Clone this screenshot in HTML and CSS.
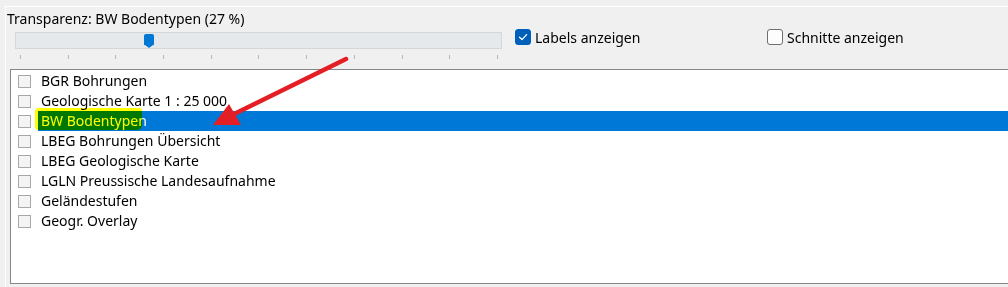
FILE: index.html
```html
<!DOCTYPE html>
<html lang="de">
<head>
<meta charset="utf-8">
<title>Transparenz</title>
<link rel="stylesheet" href="styles.css">
</head>
<body>
<div class="frame">
  <div class="top">
    <div class="slider-col">
      <div class="title">Transparenz: BW Bodentypen (27 %)</div>
      <div class="track"><span class="thumb"></span></div>
      <div class="ticks">
        <i></i><i></i><i></i><i></i><i></i><i></i><i></i><i></i><i></i><i></i><i></i>
      </div>
    </div>
    <label class="opt opt-labels"><span class="cb checked"><svg viewBox="0 0 16 16" width="16" height="16"><path d="M4.5 8.3 L7 10.6 L11.6 5.6" fill="none" stroke="#fff" stroke-width="1.3" stroke-linecap="round" stroke-linejoin="round"/></svg></span>Labels anzeigen</label>
    <label class="opt opt-schnitte"><span class="cb"></span>Schnitte anzeigen</label>
  </div>
  <div class="listbox">
    <div class="row"><span class="box"></span><span class="txt">BGR Bohrungen</span></div>
    <div class="row"><span class="box"></span><span class="txt">Geologische Karte 1 : 25 000</span></div>
    <div class="row selected"><span class="box"></span><span class="txt">BW Bodentypen</span></div>
    <div class="row"><span class="box"></span><span class="txt">LBEG Bohrungen Übersicht</span></div>
    <div class="row"><span class="box"></span><span class="txt">LBEG Geologische Karte</span></div>
    <div class="row"><span class="box"></span><span class="txt">LGLN Preussische Landesaufnahme</span></div>
    <div class="row"><span class="box"></span><span class="txt">Geländestufen</span></div>
    <div class="row"><span class="box"></span><span class="txt">Geogr. Overlay</span></div>
  </div>
</div>
<div class="marker"></div>
<svg class="arrow" width="1008" height="287" viewBox="0 0 1008 287">
  <line x1="346" y1="59" x2="226" y2="118" stroke="#e31e24" stroke-width="4.5" stroke-linecap="round"/>
  <polygon points="213,125 229,104 241,125" fill="#e31e24"/>
</svg>
</body>
</html>
```

FILE: styles.css
```css
html, body {
  margin: 0;
  padding: 0;
  width: 1008px;
  height: 287px;
  overflow: hidden;
  background: #f0f0f0;
  font-family: "Segoe UI", "Noto Sans", "Open Sans", sans-serif;
  font-size: 14px;
  color: #000;
}
.frame {
  margin: 6px 0 0 5px;
  border-top: 1px solid #ffffff;
  border-left: 1px solid #ffffff;
  height: 280px;
  position: relative;
}
.top {
  display: flex;
  align-items: flex-start;
  height: 62px;
}
.slider-col {
  width: 496px;
  padding-left: 1px;
}
.title {
  height: 20px;
  line-height: 20px;
  margin-top: 2px;
  white-space: nowrap;
}
.track {
  margin: 3px 0 0 8px;
  width: 485px;
  height: 15px;
  background: #e6e9eb;
  border: 1px solid #d4d6d8;
  position: relative;
}
.thumb {
  position: absolute;
  left: 128px;
  top: 1px;
  width: 10px;
  height: 11px;
  background: #0078d4;
  border-radius: 2px 2px 0 0;
}
.thumb::after {
  content: "";
  position: absolute;
  left: 1px;
  top: 11px;
  border-left: 4px solid transparent;
  border-right: 4px solid transparent;
  border-top: 3px solid #0078d4;
}
.ticks {
  display: flex;
  justify-content: space-between;
  width: 478px;
  margin: 6px 0 0 13px;
  height: 4px;
}
.ticks i {
  display: block;
  width: 1px;
  height: 4px;
  background: #b8b8b8;
}
.opt {
  display: flex;
  align-items: center;
  margin-top: 22px;
  white-space: nowrap;
  height: 16px;
}
.opt-labels { margin-left: 12px; width: 252px; }
.cb {
  width: 14px;
  height: 14px;
  border: 1px solid #6f6f6f;
  border-radius: 3px;
  background: #fdfdfd;
  margin-right: 4px;
  display: inline-block;
  box-sizing: content-box;
}
.cb.checked {
  background: #005fb8;
  border-color: #005fb8;
  position: relative;
}
.cb.checked svg {
  position: absolute;
  left: -1px;
  top: -1px;
}
.listbox {
  margin-left: 4px;
  height: 215px;
  width: 998px;
  background: #fff;
  border: 1px solid #86868a;
  border-right: none;
  padding-top: 1px;
  box-sizing: border-box;
}
.row {
  height: 20px;
  display: flex;
  align-items: center;
  position: relative;
}
.box {
  width: 11px;
  height: 11px;
  border: 1px solid #a8a8a8;
  background: #f4f4f4;
  margin-left: 7px;
  margin-right: 7px;
  flex: none;
}
.txt {
  height: 20px;
  line-height: 19px;
  padding-left: 3px;
  white-space: nowrap;
}
.selected .txt {
  flex: 1;
  background: #0078d7;
  color: #fff;
}
.marker {
  position: absolute;
  left: 35px;
  top: 108px;
  width: 107px;
  height: 22px;
  background: #ffff00;
  border-radius: 4px 3px 5px 4px;
  mix-blend-mode: multiply;
}
.arrow {
  position: absolute;
  left: 0;
  top: 0;
  pointer-events: none;
}
```
